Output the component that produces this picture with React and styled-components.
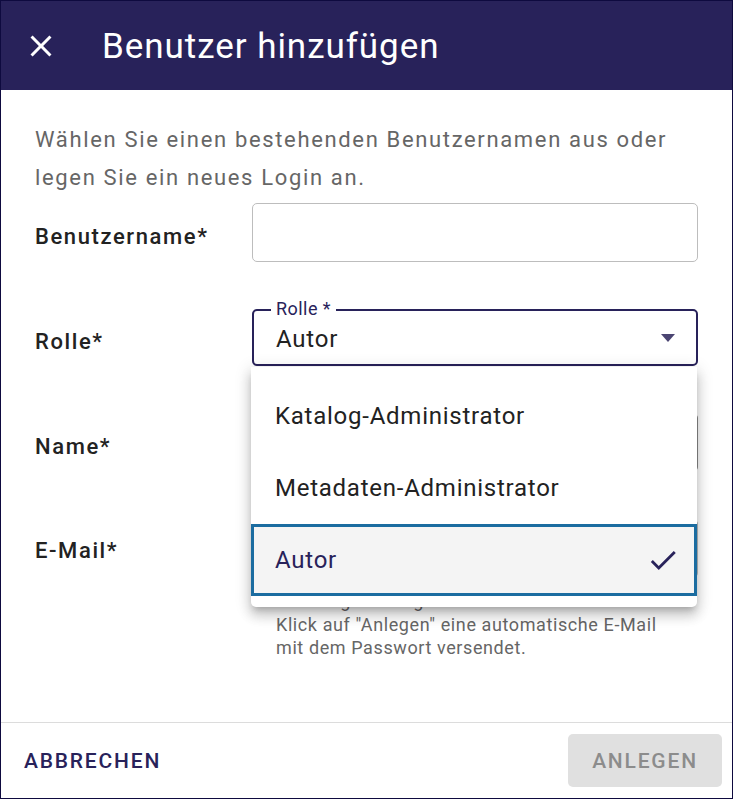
import React from "react";
import styled, { createGlobalStyle } from "styled-components";

const Global = createGlobalStyle`
  html, body { margin: 0; padding: 0; background: #fff; }
  body { font-family: Roboto, "Noto Sans", sans-serif; }
  * { box-sizing: border-box; }
`;

const NAVY = "#28225a";

const Dialog = styled.div`
  width: 733px;
  height: 799px;
  border: 1px solid #0e0a3f;
  display: flex;
  flex-direction: column;
  background: #fff;
  overflow: hidden;
`;

const Header = styled.header`
  height: 89px;
  flex-shrink: 0;
  background: ${NAVY};
  display: flex;
  align-items: center;
  padding-left: 22px;
  gap: 43px;
  color: #fff;
`;

const CloseButton = styled.button`
  width: 36px;
  height: 36px;
  padding: 0;
  border: 0;
  background: transparent;
  display: flex;
  align-items: center;
  justify-content: center;
`;

const Title = styled.h1`
  margin: 0;
  font-size: 35px;
  font-weight: 400;
  letter-spacing: 0.95px;
  line-height: 1;
  padding-top: 1px;
`;

const Body = styled.main`
  flex: 1;
  padding: 31px 34px 0 34px;
`;

const Intro = styled.p`
  margin: 0 0 6px;
  font-size: 22px;
  line-height: 38px;
  letter-spacing: 1.65px;
  color: #666;
`;

const Form = styled.div`
  display: grid;
  grid-template-columns: 217px 1fr;
  row-gap: 47px;
`;

const Label = styled.label`
  font-size: 22px;
  font-weight: 500;
  letter-spacing: 1.6px;
  color: #222;
  align-self: ${(p) => (p.$top ? "start" : "center")};
  margin-top: ${(p) => (p.$top ? "19px" : "7px")};
`;

const Input = styled.div`
  height: ${(p) => p.$h || 59}px;
  border: 1px solid ${(p) => (p.$dark ? "#8a8a8a" : "#bdbdbd")};
  border-radius: 5px;
  background: #fff;
`;

const SelectWrap = styled.div`
  position: relative;
`;

const Select = styled.div`
  height: 57px;
  border: 2px solid ${NAVY};
  border-radius: 5px;
  padding: 0 21px 0 22px;
  display: flex;
  align-items: center;
  justify-content: space-between;
  position: relative;
`;

const FloatingLabel = styled.span`
  position: absolute;
  top: -12px;
  left: 17px;
  padding: 0 5px;
  background: #fff;
  font-size: 18px;
  line-height: 20px;
  letter-spacing: 0.45px;
  color: ${NAVY};
`;

const Value = styled.span`
  font-size: 24px;
  letter-spacing: 0.8px;
  color: #222;
  margin-top: 2px;
`;

const Arrow = styled.span`
  width: 0;
  height: 0;
  border-left: 7.5px solid transparent;
  border-right: 7.5px solid transparent;
  border-top: 8px solid #4b4572;
`;

const Menu = styled.ul`
  position: absolute;
  top: 58px;
  left: -1px;
  right: 1px;
  margin: 0;
  padding: 13px 0 11px;
  list-style: none;
  background: #fff;
  border-radius: 0 0 5px 5px;
  box-shadow: 0 5px 6px -3px rgba(0,0,0,0.2), 0 9px 12px 1px rgba(0,0,0,0.14), 0 3px 16px 2px rgba(0,0,0,0.12);
  z-index: 10;
`;

const Option = styled.li`
  height: 72px;
  display: flex;
  align-items: center;
  justify-content: space-between;
  padding: 0 18px 0 24px;
  font-size: 24px;
  letter-spacing: 0.75px;
  color: #222;
  background: #fff;

  &[aria-selected="true"] {
    color: ${NAVY};
    background: #f4f4f4;
    border: 3px solid #1b6ca0;
    padding-left: 21px;
    padding-right: 14px;
  }
`;

const FieldStack = styled.div`
  display: flex;
  flex-direction: column;
`;

const Help = styled.p`
  margin: 11px 0 0;
  padding-left: 24px;
  font-size: 18px;
  line-height: 23.5px;
  letter-spacing: 0.6px;
  color: #666;
`;

const Footer = styled.footer`
  height: 76px;
  flex-shrink: 0;
  border-top: 1px solid #dcdcdc;
  display: flex;
  align-items: center;
  justify-content: space-between;
  padding: 0 10px 0 8px;
`;

const TextButton = styled.button`
  border: 0;
  background: transparent;
  font-family: Roboto, sans-serif;
  font-size: 21px;
  font-weight: 500;
  letter-spacing: 1.8px;
  color: ${NAVY};
  padding: 14px 15px;
  border-radius: 5px;
`;

const FilledButton = styled(TextButton)`
  background: #e0e0e0;
  color: #8c8c8c;
  width: 154px;
  height: 53px;
  padding: 0;
  margin-top: 0;
`;

const Check = () => (
  <svg width="34" height="34" viewBox="0 0 24 24" fill={NAVY}>
    <path d="M9 16.17 4.83 12l-1.42 1.41L9 19 21 7l-1.41-1.41z" />
  </svg>
);

export default function App() {
  return (
    <>
      <Global />
      <Dialog>
        <Header>
          <CloseButton aria-label="Schließen">
            <svg width="36" height="36" viewBox="0 0 24 24" fill="#fff">
              <path d="M19 6.41 17.59 5 12 10.59 6.41 5 5 6.41 10.59 12 5 17.59 6.41 19 12 13.41 17.59 19 19 17.59 13.41 12z" />
            </svg>
          </CloseButton>
          <Title>Benutzer hinzufügen</Title>
        </Header>
        <Body>
          <Intro>
            Wählen Sie einen bestehenden Benutzernamen aus oder legen Sie ein neues Login an.
          </Intro>
          <Form>
            <Label>Benutzername*</Label>
            <Input />
            <Label>Rolle*</Label>
            <SelectWrap>
              <Select>
                <FloatingLabel>Rolle *</FloatingLabel>
                <Value>Autor</Value>
                <Arrow />
              </Select>
              <Menu role="listbox">
                <Option role="option" aria-selected="false">Katalog-Administrator</Option>
                <Option role="option" aria-selected="false">Metadaten-Administrator</Option>
                <Option role="option" aria-selected="true">
                  Autor
                  <Check />
                </Option>
              </Menu>
            </SelectWrap>
            <Label>Name*</Label>
            <Input $dark />
            <Label $top>E-Mail*</Label>
            <FieldStack>
              <Input />
              <Help>
                Ohne eigene Eingabe wird beim
                <br />
                Klick auf "Anlegen" eine automatische E-Mail
                <br />
                mit dem Passwort versendet.
              </Help>
            </FieldStack>
          </Form>
        </Body>
        <Footer>
          <TextButton>ABBRECHEN</TextButton>
          <FilledButton disabled>ANLEGEN</FilledButton>
        </Footer>
      </Dialog>
    </>
  );
}
